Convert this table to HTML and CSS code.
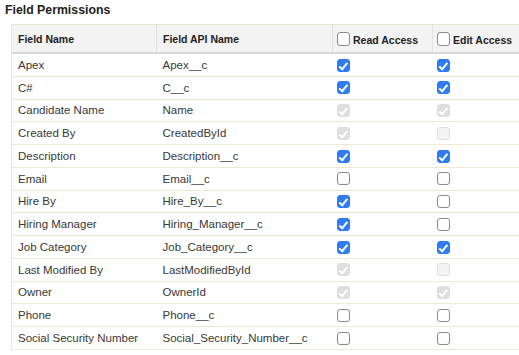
FILE: index.html
```html
<!DOCTYPE html>
<html lang="en">
<head>
    <meta charset="UTF-8">
    <title>Field Permissions</title>
    <link rel="stylesheet" href="styles.css">
</head>
<body>
  <h3 class="title">Field Permissions</h3>
  <table class="perm-table">
    <colgroup>
      <col class="c-name"><col class="c-api"><col class="c-read"><col class="c-edit">
    </colgroup>
    <thead>
      <tr>
        <th>Field Name</th>
        <th>Field API Name</th>
        <th><span class="head-box"><span class="cb"></span>Read Access</span></th>
        <th><span class="head-box"><span class="cb"></span>Edit Access</span></th>
      </tr>
    </thead>
    <tbody>
      <tr><td>Apex</td><td>Apex__c</td><td><span class="cb on"></span></td><td><span class="cb on"></span></td></tr>
      <tr><td>C#</td><td>C__c</td><td><span class="cb on"></span></td><td><span class="cb on"></span></td></tr>
      <tr><td>Candidate Name</td><td>Name</td><td><span class="cb dis-on"></span></td><td><span class="cb dis-on"></span></td></tr>
      <tr><td>Created By</td><td>CreatedById</td><td><span class="cb dis-on"></span></td><td><span class="cb dis"></span></td></tr>
      <tr><td>Description</td><td>Description__c</td><td><span class="cb on"></span></td><td><span class="cb on"></span></td></tr>
      <tr><td>Email</td><td>Email__c</td><td><span class="cb"></span></td><td><span class="cb"></span></td></tr>
      <tr><td>Hire By</td><td>Hire_By__c</td><td><span class="cb on"></span></td><td><span class="cb"></span></td></tr>
      <tr><td>Hiring Manager</td><td>Hiring_Manager__c</td><td><span class="cb on"></span></td><td><span class="cb"></span></td></tr>
      <tr><td>Job Category</td><td>Job_Category__c</td><td><span class="cb on"></span></td><td><span class="cb on"></span></td></tr>
      <tr><td>Last Modified By</td><td>LastModifiedById</td><td><span class="cb dis-on"></span></td><td><span class="cb dis"></span></td></tr>
      <tr><td>Owner</td><td>OwnerId</td><td><span class="cb dis-on"></span></td><td><span class="cb dis-on"></span></td></tr>
      <tr><td>Phone</td><td>Phone__c</td><td><span class="cb"></span></td><td><span class="cb"></span></td></tr>
      <tr><td>Social Security Number</td><td>Social_Security_Number__c</td><td><span class="cb"></span></td><td><span class="cb"></span></td></tr>
    </tbody>
  </table>
</body>
</html>
```

FILE: styles.css
```css
html, body {
  margin: 0;
  padding: 0;
  background: #ffffff;
  font-family: "Liberation Sans", Arial, sans-serif;
  overflow: hidden;
}

body {
  padding: 3px 0 0 5px;
}

.title {
  margin: 0 0 7px 0;
  font-size: 12.3px;
  font-weight: bold;
  color: #222222;
  line-height: 14px;
}

/* permissions table */
.perm-table {
  margin-left: 6px;
  width: 522px;
  border-collapse: collapse;
  table-layout: fixed;
  font-size: 11.5px;
  color: #383838;
  border: 1px solid #ebe8d8;
}

.c-name { width: 145px; }
.c-api { width: 176px; }
.c-read { width: 100px; }
.c-edit { width: 101px; }

.perm-table th {
  height: 27px;
  padding: 0 6px;
  text-align: left;
  font-size: 10.5px;
  font-weight: bold;
  color: #222222;
  background: #f3f3f3;
  border-left: 1px solid #e2e2e2;
  border-bottom: 2px solid #d8d8d8;
  vertical-align: middle;
}

.perm-table th:first-child {
  border-left: none;
}

.perm-table td {
  height: 21.75px;
  padding: 0 6px;
  border-bottom: 1px solid #ebe8d4;
  vertical-align: middle;
  white-space: nowrap;
}

.perm-table td:nth-child(3),
.perm-table td:nth-child(4) {
  padding-left: 4px;
}

.head-box {
  display: flex;
  align-items: flex-end;
  gap: 3px;
  margin-left: -2px;
}

/* checkboxes */
.cb {
  display: inline-block;
  box-sizing: border-box;
  width: 13px;
  height: 13px;
  border: 1px solid #8a8a8a;
  border-radius: 3px;
  background: #ffffff;
  vertical-align: middle;
  position: relative;
}

.head-box .cb {
  width: 13px;
  height: 14px;
}

.cb.on {
  background: #2f7bf5;
  border-color: #2f7bf5;
}

.cb.dis-on {
  background: #dedede;
  border-color: #dedede;
}

.cb.dis {
  background: #f4f4f4;
  border-color: #dddddd;
}

.cb.on::after,
.cb.dis-on::after {
  content: "";
  position: absolute;
  left: 3.5px;
  top: 1px;
  width: 3px;
  height: 6.5px;
  border: solid #ffffff;
  border-width: 0 2px 2px 0;
  transform: rotate(40deg);
}
```
